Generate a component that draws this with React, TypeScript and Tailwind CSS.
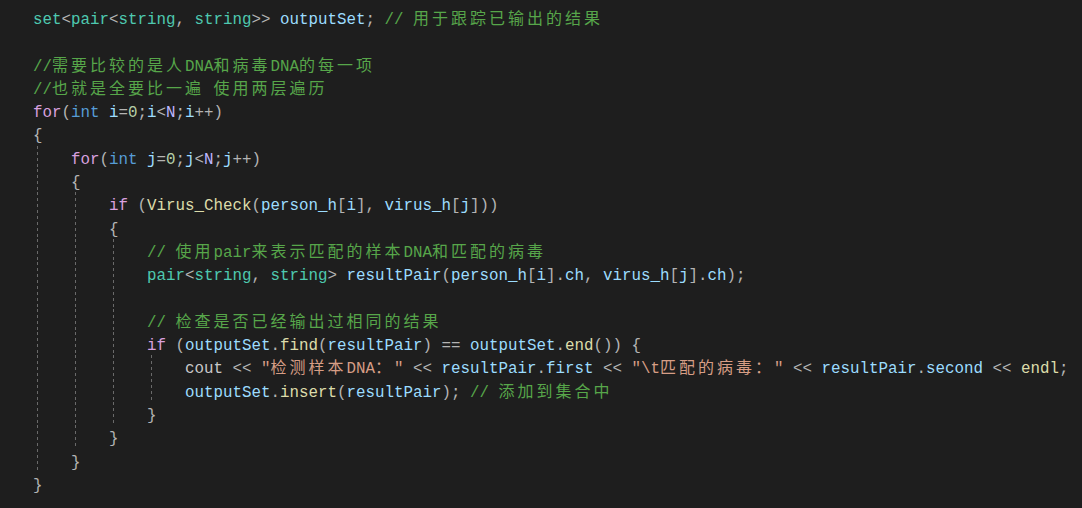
const C = {
  p: "text-[#b4b4b4]",
  type: "text-[#4ec9b0]",
  v: "text-[#9cdcfe]",
  cm: "text-[#57a64a]",
  ctl: "text-[#d8a0df]",
  kw: "text-[#569cd6]",
  num: "text-[#b5cea8]",
  mac: "text-[#beb7ff]",
  fn: "text-[#dcdcaa]",
  str: "text-[#d69d85]",
  io: "text-[#c8c8c8]",
} as const;

type Tok = [string, keyof typeof C];
type Line = { indent: number; guides?: number; toks: Tok[] };

const CJK = /([\u3000-\u9fff\uff00-\uffef]+)/;

// SimSun-style grid: every CJK glyph takes two columns (19px)
function Text({ text, color }: { text: string; color: string }) {
  const parts = text.split(CJK);
  return (
    <span className={color}>
      {parts.map((part, i) =>
        i % 2 === 1 ? (
          <span
            key={i}
            className="font-['Noto_Sans_CJK_SC',sans-serif] text-[16px] leading-none tracking-[3px]"
          >
            {part}
          </span>
        ) : (
          <span key={i}>{part}</span>
        )
      )}
    </span>
  );
}

const forLoop = (v: string): Tok[] => [
  ["for", "ctl"],
  ["(", "p"],
  ["int", "kw"],
  [" ", "p"],
  [v, "v"],
  ["=", "p"],
  ["0", "num"],
  [";", "p"],
  [v, "v"],
  ["<", "p"],
  ["N", "mac"],
  [";", "p"],
  [v, "v"],
  ["++)", "p"],
];

const LINES: Line[] = [
  {
    indent: 0,
    toks: [
      ["set", "type"],
      ["<", "p"],
      ["pair", "type"],
      ["<", "p"],
      ["string", "type"],
      [", ", "p"],
      ["string", "type"],
      [">> ", "p"],
      ["outputSet", "v"],
      [";", "p"],
      [" // 用于跟踪已输出的结果", "cm"],
    ],
  },
  { indent: 0, toks: [] },
  { indent: 0, toks: [["//需要比较的是人DNA和病毒DNA的每一项", "cm"]] },
  { indent: 0, toks: [["//也就是全要比一遍 使用两层遍历", "cm"]] },
  { indent: 0, toks: forLoop("i") },
  { indent: 0, toks: [["{", "p"]] },
  { indent: 1, toks: forLoop("j") },
  { indent: 1, toks: [["{", "p"]] },
  {
    indent: 2,
    toks: [
      ["if", "ctl"],
      [" (", "p"],
      ["Virus_Check", "fn"],
      ["(", "p"],
      ["person_h", "v"],
      ["[", "p"],
      ["i", "v"],
      ["], ", "p"],
      ["virus_h", "v"],
      ["[", "p"],
      ["j", "v"],
      ["]))", "p"],
    ],
  },
  { indent: 2, toks: [["{", "p"]] },
  { indent: 3, toks: [["// 使用pair来表示匹配的样本DNA和匹配的病毒", "cm"]] },
  {
    indent: 3,
    toks: [
      ["pair", "type"],
      ["<", "p"],
      ["string", "type"],
      [", ", "p"],
      ["string", "type"],
      ["> ", "p"],
      ["resultPair", "v"],
      ["(", "p"],
      ["person_h", "v"],
      ["[", "p"],
      ["i", "v"],
      ["].", "p"],
      ["ch", "v"],
      [", ", "p"],
      ["virus_h", "v"],
      ["[", "p"],
      ["j", "v"],
      ["].", "p"],
      ["ch", "v"],
      [");", "p"],
    ],
  },
  { indent: 0, guides: 3, toks: [] },
  { indent: 3, toks: [["// 检查是否已经输出过相同的结果", "cm"]] },
  {
    indent: 3,
    toks: [
      ["if", "ctl"],
      [" (", "p"],
      ["outputSet", "v"],
      [".", "p"],
      ["find", "fn"],
      ["(", "p"],
      ["resultPair", "v"],
      [") == ", "p"],
      ["outputSet", "v"],
      [".", "p"],
      ["end", "fn"],
      ["()) {", "p"],
    ],
  },
  {
    indent: 4,
    toks: [
      ["cout", "io"],
      [" << ", "p"],
      ["\"检测样本DNA：\"", "str"],
      [" << ", "p"],
      ["resultPair", "v"],
      [".", "p"],
      ["first", "v"],
      [" << ", "p"],
      ["\"\\t匹配的病毒：\"", "str"],
      [" << ", "p"],
      ["resultPair", "v"],
      [".", "p"],
      ["second", "v"],
      [" << ", "p"],
      ["endl", "fn"],
      [";", "p"],
    ],
  },
  {
    indent: 4,
    toks: [
      ["outputSet", "v"],
      [".", "p"],
      ["insert", "fn"],
      ["(", "p"],
      ["resultPair", "v"],
      [");", "p"],
      [" // 添加到集合中", "cm"],
    ],
  },
  { indent: 3, toks: [["}", "p"]] },
  { indent: 2, toks: [["}", "p"]] },
  { indent: 1, toks: [["}", "p"]] },
  { indent: 0, toks: [["}", "p"]] },
];

function Guide() {
  return (
    <span className="flex h-full w-[38px] shrink-0 pl-[4px]">
      <span className="h-full w-px bg-[repeating-linear-gradient(to_bottom,#6a6a6a_0px,#6a6a6a_3px,transparent_3px,transparent_6px)]" />
    </span>
  );
}

export default function App() {
  return (
    <div className="h-[508px] w-[1082px] overflow-hidden bg-[#1e1e1e] pl-[33px] pt-[6px] font-['Liberation_Mono','Noto_Sans_CJK_SC',monospace] text-[15.83px]">
      {LINES.map((line, i) => (
        <div key={i} className="flex h-[23.3px]">
          {Array.from({ length: line.guides ?? line.indent }).map((_, g) => (
            <Guide key={g} />
          ))}
          <span className="whitespace-pre pt-[3px] leading-[23.3px]">
            {line.toks.map(([text, c], t) => (
              <Text key={t} text={text} color={C[c]} />
            ))}
          </span>
        </div>
      ))}
    </div>
  );
}
